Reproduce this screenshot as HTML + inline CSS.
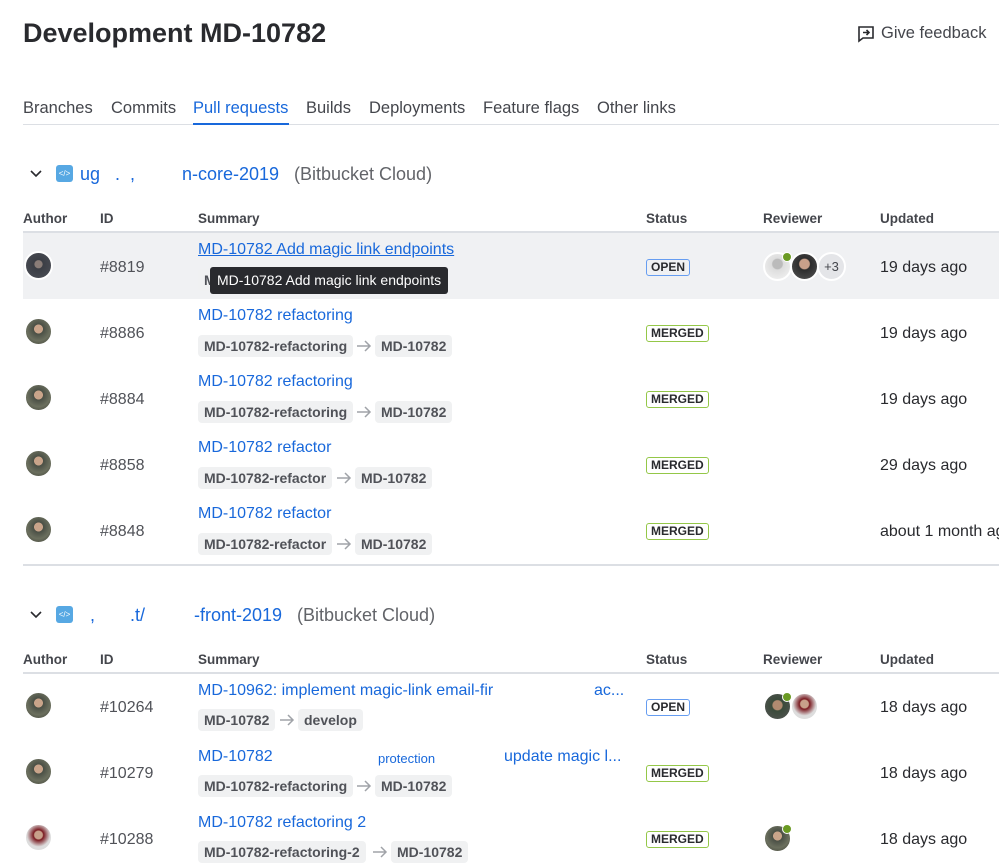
<!DOCTYPE html>
<html><head><meta charset="utf-8"><style>
*{margin:0;padding:0;box-sizing:border-box;white-space:nowrap}
body{width:999px;height:850px;overflow:hidden;background:#fff;font-family:"Liberation Sans",sans-serif;color:#292a2e;position:relative}
.a{position:absolute}
h1{position:absolute;left:23px;top:18px;font-size:27px;font-weight:700;color:#292a2e}
.tab{position:absolute;top:99px;font-size:16.5px;color:#44464c}
.hdr{position:absolute;font-size:13.5px;font-weight:700;color:#44464c}
.av{position:absolute;width:29px;height:29px;border-radius:50%;border:2px solid #fff;background:radial-gradient(circle at 50% 40%,#c9a48a 0 22%,#4a4f45 24%,#6b6f5e 60%,#3d4035 100%)}
.id{position:absolute;left:100px;font-size:16px;color:#505258}
.ttl{position:absolute;left:198px;font-size:16px;color:#1868db}
.tag{position:absolute;height:22px;line-height:22px;padding:0 6px;background:#f0f1f2;border-radius:4px;font-size:14px;font-weight:700;color:#505258}
.arr{position:absolute;width:16px;height:22px}
.st{position:absolute;left:646px;height:17px;line-height:14px;padding:0 4px;border:1.5px solid;border-radius:3px;font-size:12px;font-weight:700;color:#292a2e}
.open{border-color:#669df1}
.merged{border-color:#94c748}
.upd{position:absolute;left:880px;font-size:16px;color:#292a2e}
.chk{position:absolute;width:10px;height:10px;border-radius:50%;background:#6a9a23;border:1.5px solid #fff}
.line{position:absolute;left:23px;right:0;height:2px;background:#dcdfe4}
.sh{position:absolute;font-size:18px}
</style></head><body>
<svg width="0" height="0" style="position:absolute"><defs><symbol id="ar" viewBox="0 0 16 22"><path d="M1 11h13M9 6l5 5-5 5" fill="none" stroke="#a0a3a8" stroke-width="1.5"/></symbol></defs></svg>
<h1>Development MD-10782</h1>
<svg class="a" style="left:857px;top:25px" width="18" height="18" viewBox="0 0 18 18" fill="none" stroke="#292a2e" stroke-width="1.6"><path d="M2 2h14v11H6l-4 3z"/><path d="M6 7.5h6M9.5 5l2.5 2.5L9.5 10"/></svg>
<div class="a" style="left:881px;top:24px;font-size:16.5px;color:#44464c">Give feedback</div>

<div class="tab" style="left:23px">Branches</div>
<div class="tab" style="left:111px">Commits</div>
<div class="tab" style="left:193px;color:#1868db">Pull requests</div>
<div class="tab" style="left:306px">Builds</div>
<div class="tab" style="left:369px">Deployments</div>
<div class="tab" style="left:483px">Feature flags</div>
<div class="tab" style="left:597px">Other links</div>
<div class="a" style="left:23px;top:124px;width:976px;height:1px;background:#dcdfe4"></div>
<div class="a" style="left:193px;top:123px;width:96px;height:2px;background:#1868db"></div>

<svg class="a" style="left:29px;top:169px" width="14" height="10" viewBox="0 0 14 10" fill="none" stroke="#292a2e" stroke-width="1.6"><path d="M2 2l5 5 5-5"/></svg>
<div class="a" style="left:56px;top:165px;width:17px;height:17px;background:#57a8e3;border-radius:3px;color:#fff;font-size:8px;line-height:17px;text-align:center">&lt;/&gt;</div>
<div class="sh" style="left:80px;top:164px;color:#1868db">ug &nbsp; .&nbsp; ,</div>
<div class="sh" style="left:182px;top:164px;color:#1868db">n-core-2019</div>
<div class="sh" style="left:294px;top:164px;color:#626469">(Bitbucket Cloud)</div>

<div class="hdr" style="left:23px;top:211px">Author</div>
<div class="hdr" style="left:100px;top:211px">ID</div>
<div class="hdr" style="left:198px;top:211px">Summary</div>
<div class="hdr" style="left:646px;top:211px">Status</div>
<div class="hdr" style="left:763px;top:211px">Reviewer</div>
<div class="hdr" style="left:880px;top:211px">Updated</div>
<div class="line" style="top:231px"></div>

<div class="a" style="left:23px;top:233px;width:976px;height:66px;background:#f0f1f3"></div>
<div class="av" style="left:24px;top:251px;background:radial-gradient(circle at 50% 45%,#8a7d78 0 20%,#3b3e45 24%,#4d5058 100%)"></div>
<div class="id" style="top:259px">#8819</div>
<div class="ttl" style="top:241px;text-decoration:underline">MD-10782 Add magic link endpoints</div>
<div class="tag" style="left:198px;top:269px">M</div>
<div class="a" style="left:210px;top:267px;height:27px;line-height:27px;padding:0 7px;background:#292a2e;color:#fff;font-size:14px;border-radius:3px">MD-10782 Add magic link endpoints</div>
<div class="st open" style="top:259px">OPEN</div>
<div class="av" style="left:763px;top:252px;background:radial-gradient(circle at 50% 40%,#bbb 0 25%,#ddd 30%,#f4f4f4 100%)"></div>
<div class="chk" style="left:782px;top:252px"></div>
<div class="av" style="left:790px;top:252px;background:radial-gradient(circle at 50% 40%,#c8a08a 0 25%,#2d2d2d 30%,#555 100%)"></div>
<div class="av" style="left:817px;top:252px;background:#e4e5e8;color:#44464c;font-size:13px;line-height:25px;text-align:center">+3</div>
<div class="upd" style="top:259px">19 days ago</div>

<div class="av" style="left:24px;top:317px"></div>
<div class="id" style="top:325px">#8886</div>
<div class="ttl" style="top:307px">MD-10782 refactoring</div>
<div class="tag" style="left:198px;top:335px">MD-10782-refactoring</div>
<svg class="arr" style="left:356px;top:335px"><use href="#ar"/></svg>
<div class="tag" style="left:375px;top:335px">MD-10782</div>
<div class="st merged" style="top:325px">MERGED</div>
<div class="upd" style="top:325px">19 days ago</div>

<div class="av" style="left:24px;top:383px"></div>
<div class="id" style="top:391px">#8884</div>
<div class="ttl" style="top:373px">MD-10782 refactoring</div>
<div class="tag" style="left:198px;top:401px">MD-10782-refactoring</div>
<svg class="arr" style="left:356px;top:401px"><use href="#ar"/></svg>
<div class="tag" style="left:375px;top:401px">MD-10782</div>
<div class="st merged" style="top:391px">MERGED</div>
<div class="upd" style="top:391px">19 days ago</div>

<div class="av" style="left:24px;top:449px"></div>
<div class="id" style="top:457px">#8858</div>
<div class="ttl" style="top:439px">MD-10782 refactor</div>
<div class="tag" style="left:198px;top:467px">MD-10782-refactor</div>
<svg class="arr" style="left:336px;top:467px"><use href="#ar"/></svg>
<div class="tag" style="left:355px;top:467px">MD-10782</div>
<div class="st merged" style="top:457px">MERGED</div>
<div class="upd" style="top:457px">29 days ago</div>

<div class="av" style="left:24px;top:515px"></div>
<div class="id" style="top:523px">#8848</div>
<div class="ttl" style="top:505px">MD-10782 refactor</div>
<div class="tag" style="left:198px;top:533px">MD-10782-refactor</div>
<svg class="arr" style="left:336px;top:533px"><use href="#ar"/></svg>
<div class="tag" style="left:355px;top:533px">MD-10782</div>
<div class="st merged" style="top:523px">MERGED</div>
<div class="upd" style="top:523px">about 1 month ago</div>
<div class="line" style="top:564px"></div>

<svg class="a" style="left:29px;top:610px" width="14" height="10" viewBox="0 0 14 10" fill="none" stroke="#292a2e" stroke-width="1.6"><path d="M2 2l5 5 5-5"/></svg>
<div class="a" style="left:56px;top:606px;width:17px;height:17px;background:#57a8e3;border-radius:3px;color:#fff;font-size:8px;line-height:17px;text-align:center">&lt;/&gt;</div>
<div class="sh" style="left:90px;top:605px;color:#1868db">,&nbsp;&nbsp;&nbsp;&nbsp;&nbsp;&nbsp;&nbsp;.t/</div>
<div class="sh" style="left:194px;top:605px;color:#1868db">-front-2019</div>
<div class="sh" style="left:297px;top:605px;color:#626469">(Bitbucket Cloud)</div>

<div class="hdr" style="left:23px;top:652px">Author</div>
<div class="hdr" style="left:100px;top:652px">ID</div>
<div class="hdr" style="left:198px;top:652px">Summary</div>
<div class="hdr" style="left:646px;top:652px">Status</div>
<div class="hdr" style="left:763px;top:652px">Reviewer</div>
<div class="hdr" style="left:880px;top:652px">Updated</div>
<div class="line" style="top:672px"></div>

<div class="av" style="left:24px;top:691px"></div>
<div class="id" style="top:699px">#10264</div>
<div class="ttl" style="top:682px">MD-10962: implement magic-link email-fir</div>
<div class="ttl" style="left:594px;top:682px">ac...</div>
<div class="tag" style="left:198px;top:709px">MD-10782</div>
<svg class="arr" style="left:279px;top:709px"><use href="#ar"/></svg>
<div class="tag" style="left:298px;top:709px">develop</div>
<div class="st open" style="top:699px">OPEN</div>
<div class="av" style="left:763px;top:692px;background:radial-gradient(circle at 50% 45%,#b08a70 0 25%,#3a4a3a 30%,#555 100%)"></div>
<div class="chk" style="left:782px;top:692px"></div>
<div class="av" style="left:790px;top:692px;background:radial-gradient(circle at 50% 40%,#c8a08a 0 20%,#7a1a20 26%,#ddd 60%)"></div>
<div class="upd" style="top:699px">18 days ago</div>

<div class="av" style="left:24px;top:757px"></div>
<div class="id" style="top:765px">#10279</div>
<div class="ttl" style="top:748px">MD-10782</div>
<div class="ttl" style="left:378px;font-size:13px;top:751px">protection</div>
<div class="ttl" style="left:504px;top:748px">update magic l...</div>
<div class="tag" style="left:198px;top:775px">MD-10782-refactoring</div>
<svg class="arr" style="left:356px;top:775px"><use href="#ar"/></svg>
<div class="tag" style="left:375px;top:775px">MD-10782</div>
<div class="st merged" style="top:765px">MERGED</div>
<div class="upd" style="top:765px">18 days ago</div>

<div class="av" style="left:24px;top:823px;background:radial-gradient(circle at 50% 40%,#c8a08a 0 20%,#7a1a20 26%,#ddd 60%)"></div>
<div class="id" style="top:831px">#10288</div>
<div class="ttl" style="top:814px">MD-10782 refactoring 2</div>
<div class="tag" style="left:198px;top:841px">MD-10782-refactoring-2</div>
<svg class="arr" style="left:372px;top:841px"><use href="#ar"/></svg>
<div class="tag" style="left:391px;top:841px">MD-10782</div>
<div class="st merged" style="top:831px">MERGED</div>
<div class="av" style="left:763px;top:824px"></div>
<div class="chk" style="left:782px;top:824px"></div>
<div class="upd" style="top:831px">18 days ago</div>
</body></html>
